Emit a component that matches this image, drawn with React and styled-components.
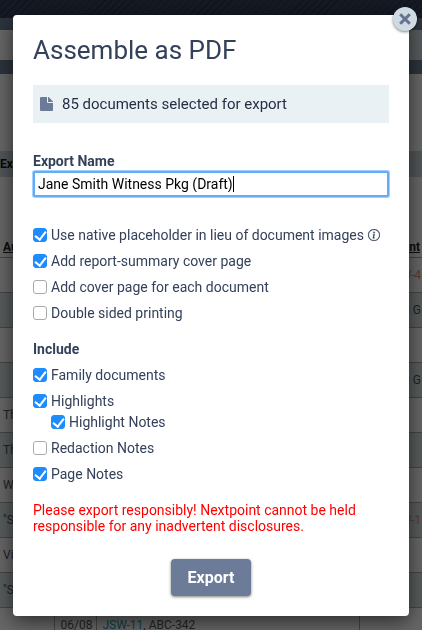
import React, { useState } from "react";
import styled, { createGlobalStyle } from "styled-components";
import { BsInfoCircle } from "react-icons/bs";

const GlobalStyle = createGlobalStyle`
  * {
    box-sizing: border-box;
  }
  body {
    margin: 0;
    overflow: hidden;
    color: #34415a;
    background: #fff;
    font-family: Roboto, "Liberation Sans", sans-serif;
    font-size: 14px;
  }
`;

const Page = styled.div`
  height: 100vh;
  overflow: hidden;
`;

const TopBar = styled.div`
  height: 18px;
  background: repeating-linear-gradient(
    135deg,
    #34405a 0 4px,
    #28324a 4px 5px
  );
`;

const Bar = styled.div`
  height: ${({ $height }) => $height}px;
  background: ${({ $color }) => $color};
`;

const SectionBar = styled.div`
  height: 26px;
  line-height: 26px;
  margin-top: 77px;
  background: #c9d6de;
  color: #111;
  font-size: 12px;
  font-weight: 700;
`;

const DocsTable = styled.table`
  width: 100%;
  margin-top: 60px;
  border-collapse: collapse;
  table-layout: fixed;
  color: #555;
  font-size: 12px;
`;

const HeadCell = styled.th`
  height: 20px;
  padding: 0 2px 0 3px;
  border-bottom: 1px solid #aaa;
  color: #222;
  text-align: ${({ $right }) => ($right ? "right" : "left")};
  text-decoration: underline;
  white-space: nowrap;
`;

const DocRow = styled.tr`
  height: 35px;
  background: ${({ $tinted }) => ($tinted ? "#dae5e7" : "#fff")};
`;

const Cell = styled.td`
  padding: 0 1px 0 ${({ $first }) => ($first ? 3 : 6)}px;
  border-bottom: 1px solid #aaa;
  border-left: ${({ $first }) => ($first ? "0" : "1px solid #aaa")};
  color: ${({ $flagged }) => ($flagged ? "#e08a8a" : "inherit")};
  text-align: ${({ $right }) => ($right ? "right" : "left")};
  white-space: nowrap;
`;

const DocLink = styled.a`
  color: #1b9db3;
  text-decoration: none;
`;

const Backdrop = styled.div`
  position: fixed;
  inset: 0;
  padding: 15px 13px;
  background: rgba(0, 0, 0, 0.6);
`;

const Modal = styled.form`
  position: relative;
  max-width: 480px;
  margin: 0 auto;
  padding: 20px;
  background: #fff;
  border-radius: 4px;
  box-shadow: 0 5px 20px rgba(0, 0, 0, 0.6);
`;

const CloseButton = styled.button`
  position: absolute;
  top: -8px;
  right: -8px;
  display: flex;
  align-items: center;
  justify-content: center;
  width: 24px;
  height: 24px;
  padding: 0;
  border: 0;
  border-radius: 50%;
  background: #cfdae3;
  box-shadow: 0 1px 3px rgba(0, 0, 0, 0.5);
  cursor: pointer;
`;

const Title = styled.h1`
  margin: 0 0 20px;
  font-size: 26px;
  font-weight: 400;
  line-height: 30px;
`;

const Summary = styled.div`
  display: flex;
  align-items: center;
  gap: 9px;
  height: 38px;
  margin-bottom: 29px;
  padding: 0 7px;
  background: #e9f1f5;
  color: #252f42;
  font-size: 15px;
`;

const NameLabel = styled.label`
  display: block;
  font-weight: 700;
  line-height: 19px;
`;

const NameField = styled.div`
  position: relative;
  margin-bottom: 30px;
`;

const NameInput = styled.input`
  display: block;
  width: 100%;
  height: 26px;
  padding: 0 3px;
  border: 2px solid #62abf7;
  border-radius: 2px;
  outline: 0;
  box-shadow: 0 0 0 1px #a5cffd;
  color: #000;
  caret-color: transparent;
  font: 14px Roboto, "Liberation Sans", sans-serif;
`;

const Caret = styled.span`
  position: absolute;
  top: 5px;
  left: 200px;
  width: 1px;
  height: 16px;
  background: #000;
`;

const Options = styled.fieldset`
  display: flex;
  flex-direction: column;
  gap: 10px;
  margin: 0 0 20px;
  padding: 0;
  border: 0;
`;

const OptionGroup = styled.div`
  display: flex;
  flex-direction: column;
  gap: 5px;
`;

const Legend = styled.legend`
  margin-bottom: 10px;
  padding: 0;
  font-weight: 700;
  line-height: 16px;
`;

const OptionLabel = styled.label`
  display: flex;
  align-items: center;
  gap: 4px;
  padding-left: ${({ $nested }) => ($nested ? 18 : 0)}px;
  line-height: 16px;
  white-space: nowrap;
`;

const Checkbox = styled.input`
  appearance: none;
  display: flex;
  justify-content: center;
  flex: none;
  width: 14px;
  height: 14px;
  margin: 0;
  border: 1px solid #aaa;
  border-radius: 3px;
  background: #fff;

  &:checked {
    border-color: #1e8bff;
    background: #1e8bff;
  }

  &:checked::after {
    content: "";
    width: 5px;
    height: 9px;
    border: solid #fff;
    border-width: 0 2px 2px 0;
    transform: rotate(38deg);
  }
`;

const InfoIcon = styled(BsInfoCircle)`
  stroke: currentColor;
  stroke-width: 0.4;
`;

const Warning = styled.p`
  margin: 0 0 25px;
  color: #f00;
  line-height: 16px;
`;

const ExportButton = styled.button`
  display: block;
  height: 37px;
  margin: 0 auto;
  padding: 0 17px;
  border: 0;
  border-radius: 4px;
  background: #6c7b98;
  box-shadow: 0 1px 3px rgba(0, 0, 0, 0.5);
  color: #fff;
  font: 700 16px Roboto, "Liberation Sans", sans-serif;
  cursor: pointer;
`;

const FileIcon = () => (
  <svg width="13" height="14" viewBox="0 0 13 14" fill="#6c7b98">
    <path d="M1 0h6v5a1 1 0 0 0 1 1h5v7a1 1 0 0 1-1 1H1a1 1 0 0 1-1-1V1a1 1 0 0 1 1-1z" />
    <path d="M8 0h.6L13 4.400V5H8z" />
  </svg>
);

const CloseIcon = () => (
  <svg width="12" height="12" viewBox="0 0 12 12">
    <path
      d="M1.200 1.200l9.600 9.600M10.800 1.200l-9.600 9.600"
      stroke="#64738f"
      strokeWidth="3"
    />
  </svg>
);

const docs = [
  { event: "JSW-4", flagged: true },
  { event: "Meeting G" },
  {},
  { event: "Meeting G" },
  { author: "Thomas" },
  { author: "Thomas" },
  { author: "Wilson" },
  { author: '"Smith', event: "JSW-1", flagged: true },
  { author: "Victor" },
  { author: '"Smith' },
  { date: "06/08", id: "JSW-11", other: ", ABC-342" },
];

const exportOptions = [
  {
    id: "placeholder",
    label: "Use native placeholder in lieu of document images",
    info: true,
  },
  { id: "summary", label: "Add report-summary cover page" },
  { id: "cover", label: "Add cover page for each document" },
  { id: "duplex", label: "Double sided printing" },
];

const App = () => {
  const [name, setName] = useState("Jane Smith Witness Pkg (Draft)");
  const [checked, setChecked] = useState({
    placeholder: true,
    summary: true,
    family: true,
    highlights: true,
    highlightNotes: true,
    pageNotes: true,
  });

  const toggle = (id) => setChecked({ ...checked, [id]: !checked[id] });

  const renderOption = ({ id, label, info, nested }) => (
    <OptionLabel key={id} $nested={nested}>
      <Checkbox
        type="checkbox"
        checked={Boolean(checked[id])}
        onChange={() => toggle(id)}
      />
      {label}
      {info && <InfoIcon size={12} />}
    </OptionLabel>
  );

  return (
    <React.Fragment>
      <GlobalStyle />
      <Page>
        <TopBar />
        <Bar $height={12} $color="#6f8199" />
        <Bar $height={30} $color="linear-gradient(90deg, #fff, #dbe3e7)" />
        <Bar $height={14} $color="#6f8199" />
        <SectionBar>Exports</SectionBar>
        <DocsTable>
          <colgroup>
            <col width="54" />
            <col width="42" />
            <col />
            <col width="63" />
          </colgroup>
          <thead>
            <tr>
              <HeadCell>Author</HeadCell>
              <HeadCell />
              <HeadCell />
              <HeadCell $right>Event</HeadCell>
            </tr>
          </thead>
          <tbody>
            {docs.map((doc, index) => (
              <DocRow key={index} $tinted={index % 2 === 1}>
                <Cell $first>{doc.author}</Cell>
                <Cell>{doc.date}</Cell>
                <Cell>
                  {doc.id && <DocLink href="#doc">{doc.id}</DocLink>}
                  {doc.other}
                </Cell>
                <Cell $right $flagged={doc.flagged}>
                  {doc.event}
                </Cell>
              </DocRow>
            ))}
          </tbody>
        </DocsTable>
      </Page>
      <Backdrop>
        <Modal onSubmit={(e) => e.preventDefault()}>
          <CloseButton type="button" aria-label="Close">
            <CloseIcon />
          </CloseButton>
          <Title>Assemble as PDF</Title>
          <Summary>
            <FileIcon />
            85 documents selected for export
          </Summary>
          <NameLabel htmlFor="export-name">Export Name</NameLabel>
          <NameField>
            <NameInput
              id="export-name"
              value={name}
              onChange={(e) => setName(e.target.value)}
            />
            <Caret />
          </NameField>
          <Options>{exportOptions.map(renderOption)}</Options>
          <Options>
            <Legend>Include</Legend>
            {renderOption({ id: "family", label: "Family documents" })}
            <OptionGroup>
              {renderOption({ id: "highlights", label: "Highlights" })}
              {renderOption({
                id: "highlightNotes",
                label: "Highlight Notes",
                nested: true,
              })}
            </OptionGroup>
            {renderOption({ id: "redactionNotes", label: "Redaction Notes" })}
            {renderOption({ id: "pageNotes", label: "Page Notes" })}
          </Options>
          <Warning>
            Please export responsibly! Nextpoint cannot be held responsible for
            any inadvertent disclosures.
          </Warning>
          <ExportButton type="submit">Export</ExportButton>
        </Modal>
      </Backdrop>
    </React.Fragment>
  );
};

export default App;
